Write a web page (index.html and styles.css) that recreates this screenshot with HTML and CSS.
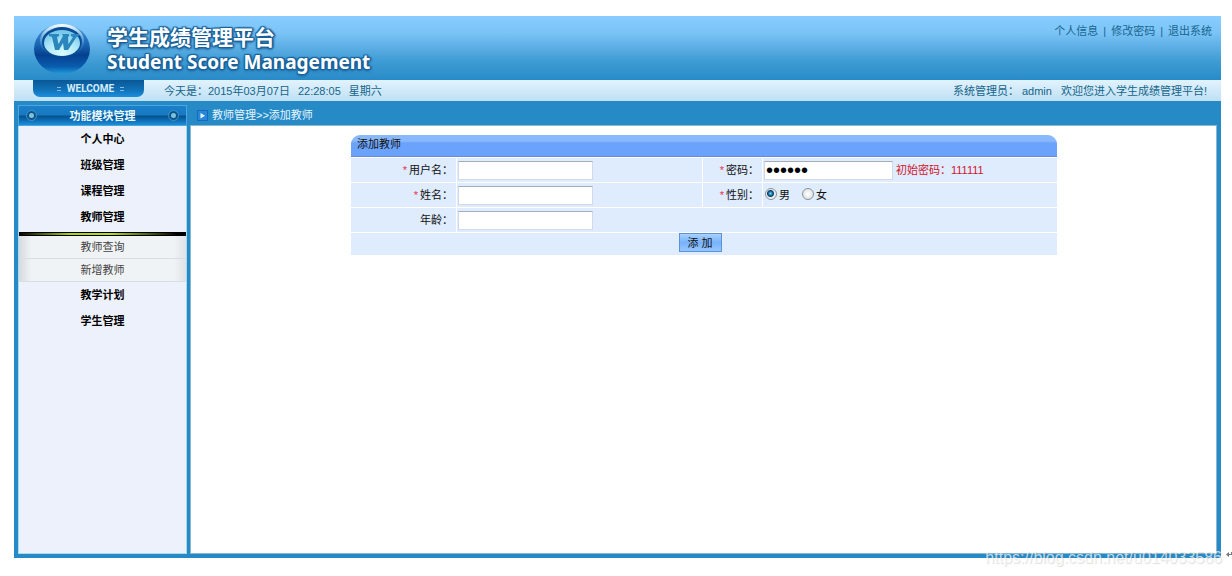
FILE: index.html
```html
<!DOCTYPE html>
<html lang="zh-CN">
<head>
<meta charset="utf-8">
<title>学生成绩管理平台</title>
<link rel="stylesheet" href="styles.css">
</head>
<body>
<div class="app">
  <header class="banner">
    <svg class="logo" width="58" height="52" viewBox="0 0 58 52" aria-hidden="true">
      <defs>
        <linearGradient id="ball" x1="0" y1="0" x2="0" y2="1">
          <stop offset="0" stop-color="#4f9fdc"/><stop offset=".4" stop-color="#1a66b4"/><stop offset=".62" stop-color="#04418f"/><stop offset=".85" stop-color="#0a5cae"/><stop offset="1" stop-color="#1f9bdc"/>
        </linearGradient>
        <linearGradient id="rim" x1="0" y1="0" x2="0" y2="1">
          <stop offset="0" stop-color="#ffffff"/><stop offset=".5" stop-color="#7cc4f0" stop-opacity=".5"/><stop offset="1" stop-color="#0a4fa0" stop-opacity="0"/>
        </linearGradient>
        <radialGradient id="face" cx=".5" cy=".9" r=".8">
          <stop offset="0" stop-color="#dcfcff"/><stop offset=".6" stop-color="#aae6f7"/><stop offset="1" stop-color="#78c8ec"/>
        </radialGradient>
      </defs>
      <ellipse cx="29" cy="26" rx="28" ry="25" fill="url(#ball)"/>
      <ellipse cx="29" cy="18" rx="22" ry="17" fill="url(#rim)"/>
      <ellipse cx="29" cy="19" rx="20" ry="15" fill="#0b4c96"/>
      <ellipse cx="29" cy="20" rx="18" ry="13" fill="url(#face)"/>
      <path d="M16 11H26V13L24 14L25.500 21L30 13L29 11H36V13L35 14L35.500 21L40 14L38 13V11H46V13L43.500 14L35 27H31L30 20L26 27H22L19 14L16 13Z" fill="#2a86bd"/>
    </svg>
    <h1 class="title"><span class="title-zh">学生成绩管理平台</span><span class="title-en">Student Score Management</span></h1>
    <nav class="top-links"><a href="#">个人信息</a><span>|</span><a href="#">修改密码</a><span>|</span><a href="#">退出系统</a></nav>
  </header>

  <div class="status">
    <div class="welcome"><i></i><span>WELCOME</span><i></i></div>
    <p class="date"><span>今天是：2015年03月07日</span><span>22:28:05</span><span>星期六</span></p>
    <p class="greeting"><span>系统管理员： admin</span><span>欢迎您进入学生成绩管理平台!</span></p>
  </div>

  <div class="body">
    <aside class="sidebar">
      <h2 class="side-head"><i class="knob"></i><span>功能模块管理</span><i class="knob"></i></h2>
      <nav class="menu">
        <a class="item" href="#">个人中心</a>
        <a class="item" href="#">班级管理</a>
        <a class="item" href="#">课程管理</a>
        <a class="item" href="#">教师管理</a>
        <div class="submenu">
          <a class="subitem" href="#">教师查询</a>
          <a class="subitem" href="#">新增教师</a>
        </div>
        <a class="item" href="#">教学计划</a>
        <a class="item" href="#">学生管理</a>
      </nav>
    </aside>

    <main class="main">
      <div class="crumb">
        <svg width="11" height="11" viewBox="0 0 11 11" aria-hidden="true"><path d="M0 0H11V11H0Z" fill="#1569bd"/><path d="M1 1H10V10H1Z" fill="#2a86d8"/><path d="M3.500 3L8 5.800L3.500 8.600Z" fill="#e8fbff"/></svg>
        <span>教师管理&gt;&gt;添加教师</span>
      </div>
      <div class="content">
        <form class="card">
          <h3 class="card-head">添加教师</h3>
          <div class="grid">
            <label class="cell label" for="user"><b>*</b>用户名：</label>
            <div class="cell"><input class="text" id="user" type="text"></div>
            <label class="cell label" for="pass"><b>*</b>密码：</label>
            <div class="cell"><input class="text pass" id="pass" type="password" value="111111"><span class="hint">初始密码：111111</span></div>
            <label class="cell label" for="name"><b>*</b>姓名：</label>
            <div class="cell"><input class="text" id="name" type="text"></div>
            <div class="cell label" id="sex"><b>*</b>性别：</div>
            <div class="cell" role="radiogroup" aria-labelledby="sex">
              <label class="choice"><input type="radio" name="sex" checked>男</label>
              <label class="choice"><input type="radio" name="sex">女</label>
            </div>
            <label class="cell label" for="age">年龄：</label>
            <div class="cell wide"><input class="text" id="age" type="text"></div>
            <div class="cell actions"><button class="submit" type="button">添 加</button></div>
          </div>
        </form>
      </div>
    </main>
  </div>
  <div class="watermark">https://blog.csdn.net/u014033586</div>
  <svg class="mark" width="6" height="7" viewBox="0 0 6 7" aria-hidden="true"><path d="M0 3.500L3 1V6ZM2 3H5V1H6V4H2Z" fill="#777"/></svg>
</div>
</body>
</html>
```
FILE: styles.css
```css
* { box-sizing: border-box; }

body {
  margin: 0;
  background: #fff;
  color: #111;
  font: 11px/16px "Liberation Sans", "Noto Sans CJK SC", sans-serif;
}

h1, h2, h3, p { margin: 0; font-size: inherit; font-weight: normal; }
a { color: inherit; text-decoration: none; }

.app {
  position: relative;
  display: flex;
  flex-direction: column;
  min-height: calc(100vh - 34px);
  margin: 16px 11px 18px 14px;
  background: #268ac7;
}

.banner {
  display: flex;
  align-items: flex-start;
  height: 64px;
  padding: 7px 9px 0 19px;
  background: linear-gradient(#88cdfe 0%, #7cc4f7 25%, #3f9cd4 70%, #288bc8 100%);
}

.title {
  flex: 1;
  display: flex;
  flex-direction: column;
  padding: 3px 0 0 16px;
  color: #fff;
  font-weight: bold;
  white-space: nowrap;
  text-shadow: 1px 1px 1px #1a6099, -1px -1px 1px #1a6099, 1px -1px 1px #1a6099, -1px 1px 1px #1a6099, 0 2px 3px #1a6099, 2px 0 2px #1a6099;
}
.title-zh { font: bold 21px/24px "Liberation Sans", "Noto Sans CJK SC", sans-serif; }
.title-en { font: bold 19px/24px "Noto Sans", sans-serif; }

.top-links { display: flex; gap: 5px; color: #17658f; }

.status {
  display: flex;
  align-items: center;
  height: 21px;
  padding: 0 14px 0 19px;
  background: linear-gradient(#e2f3fd, #bfe0f5);
  color: #15658a;
}
.welcome {
  align-self: flex-start;
  display: flex;
  align-items: center;
  justify-content: center;
  gap: 6px;
  width: 111px;
  height: 17px;
  padding-left: 4px;
  border-radius: 0 0 7px 7px;
  background: linear-gradient(#0a5796, #1173b8 60%, #1b8ee0);
  color: #d5edfb;
  font: bold 10px/16px Roboto, sans-serif;
}
.welcome i { width: 4px; height: 4px; border: solid #7fb9df; border-width: 1px 0; }
.date { flex: 1; display: flex; gap: 8px; padding-left: 20px; }
.greeting { display: flex; gap: 9px; }

.body {
  flex: 1;
  display: flex;
  gap: 3px;
  padding: 4px;
}

.sidebar { display: flex; flex-direction: column; width: 169px; }
.side-head {
  display: flex;
  align-items: center;
  justify-content: space-between;
  height: 21px;
  padding: 0 8px;
  border: 1px solid #4ba6de;
  background: linear-gradient(#1a80cb 0%, #1878c0 48%, #04518f 52%, #0d6db5 75%, #1d8fd8 100%);
  color: #e8f8ff;
  font-weight: bold;
}
.knob { width: 9px; height: 9px; border: 2px solid #0e5488; border-radius: 50%; background: #7cc3dc; outline: 1px solid #3b93c9; }

.menu {
  flex: 1;
  display: flex;
  flex-direction: column;
  border: solid #a7dcf0;
  border-width: 0 1px 1px;
  background: #edf1fb;
  text-align: center;
}
.item { color: #000; font-weight: bold; line-height: 26px; }
.submenu {
  margin-top: 2px;
  border-top: 1px solid #000;
  background: linear-gradient(90deg, #d5dade 0, #f0f3f6 12px, #f0f3f6 155px, #dfe3e7 100%);
}
.submenu::before {
  content: "";
  display: block;
  height: 2px;
  border-bottom: 1px solid #000;
  background: linear-gradient(90deg, #000, #a8d020 30%, #b4dc28 55%, #000 95%);
}
.subitem {
  display: block;
  color: #444;
  line-height: 22px;
  border-bottom: 1px solid #d9dee4;
}

.main { flex: 1; display: flex; flex-direction: column; min-width: 0; }
.crumb { display: flex; align-items: center; gap: 4px; height: 20px; padding-left: 7px; color: #e6f6ff; }
.content {
  flex: 1;
  padding: 9px 159px 0 160px;
  border: 1px solid #8ab9cf;
  background: #fff;
}

.card-head {
  height: 22px;
  padding: 1px 6px;
  border-bottom: 1px solid #6790cf;
  border-radius: 9px 9px 0 0;
  background: linear-gradient(#8ab8fd 0, #8ab8fd 6px, #6ba2fb 8px, #6ba2fb 100%);
}
.grid {
  display: grid;
  grid-template-columns: 105px 1fr 59px 294px;
  grid-template-rows: 24px 24px 24px 22px;
  gap: 1px;
  padding-top: 1px;
}
.cell { display: flex; align-items: center; padding-left: 1px; background: #dfecfe; }
.label { justify-content: flex-end; padding-right: 3px; }
.label b { padding-right: 2px; color: #e8304c; font-weight: normal; }
.wide { grid-column: span 3; }
.actions { grid-column: 1 / -1; align-items: flex-start; justify-content: center; padding: 0 8px 0 0; }

.text {
  width: 135px;
  height: 19px;
  padding: 0 3px;
  border: 1px solid #d0dae8;
  border-top-color: #a4adb8;
  background: #fff;
  font: inherit;
}
.pass { width: 129px; padding: 0 1px; font-size: 20px; }
.hint { padding-left: 3px; color: #d2142c; }
.choice { display: flex; align-items: center; gap: 2px; padding: 0 11px 0 1px; }
.choice input {
  appearance: none;
  width: 12px;
  height: 12px;
  margin: 0 0 2px;
  border: 1px solid #8b9197;
  border-radius: 50%;
  background: radial-gradient(#fff, #d6d9dc);
}
.choice input:checked { background: radial-gradient(circle at 45% 45%, #7fd4f2 0, #15719f 2px, #0c3f62 3px, #e8eef2 4px); }
.submit {
  width: 43px;
  height: 19px;
  padding: 0;
  border: 1px solid #5c92d6;
  background: linear-gradient(#a9d1fe, #78b2fb 50%, #96c6fe);
  color: #111;
  font: inherit;
}

.watermark {
  position: absolute;
  right: -1px;
  bottom: -10px;
  color: rgba(255, 255, 255, .7);
  font-size: 16px;
  line-height: 20px;
  text-shadow: 1px 1px 1px rgba(120, 120, 120, .25);
}
.mark { position: absolute; right: -11px; bottom: 0; }
```
